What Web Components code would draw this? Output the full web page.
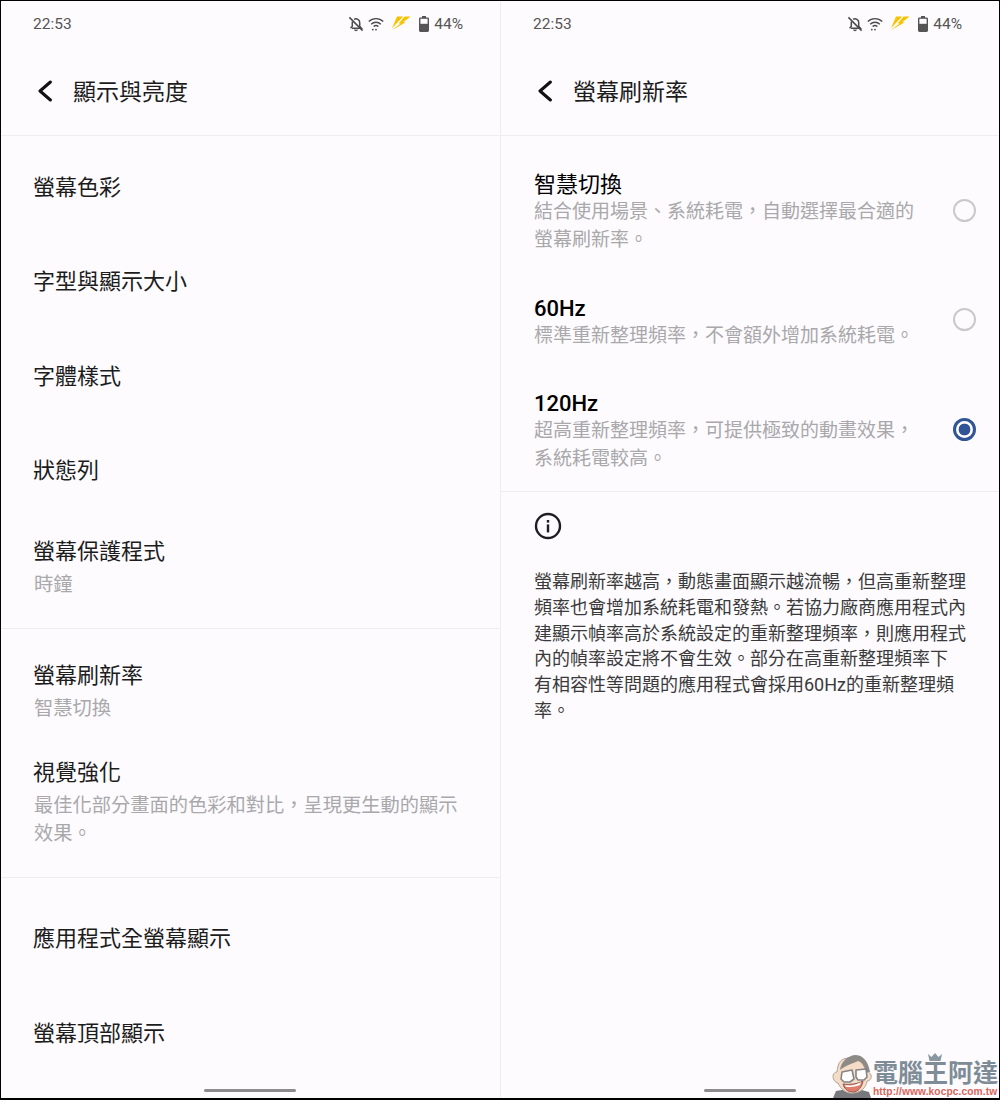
<!DOCTYPE html>
<html lang="zh-Hant">
<head>
<meta charset="utf-8">
<title>螢幕刷新率</title>
<style>
    html, body { margin: 0; padding: 0; background: #fdfbfe; }
    body { font-family: Roboto, "Noto Sans CJK TC", sans-serif; }
</style>
</head>
<body>

<phone-frame>
    <phone-pane>
        <status-bar></status-bar>
        <title-bar>顯示與亮度</title-bar>
        <row-group top="2" bottom="0">
            <plain-row>螢幕色彩</plain-row>
            <plain-row>字型與顯示大小</plain-row>
            <plain-row>字體樣式</plain-row>
            <plain-row>狀態列</plain-row>
        </row-group>
        <row-group top="24" bottom="29" divider>
            <sub-row><span slot="title">螢幕保護程式</span>時鐘</sub-row>
        </row-group>
        <row-group top="34" bottom="29" gap="37" divider>
            <sub-row><span slot="title">螢幕刷新率</span>智慧切換</sub-row>
            <sub-row><span slot="title">視覺強化</span>最佳化部分畫面的色彩和對比，呈現更生動的顯示效果。</sub-row>
        </row-group>
        <row-group top="11" bottom="0">
            <plain-row>應用程式全螢幕顯示</plain-row>
            <plain-row>螢幕頂部顯示</plain-row>
        </row-group>
        <home-bar></home-bar>
    </phone-pane>

    <phone-pane>
        <status-bar></status-bar>
        <title-bar>螢幕刷新率</title-bar>
        <row-group top="36" bottom="18" gap="41.5" divider>
            <radio-row><span slot="title">智慧切換</span>結合使用場景、系統耗電，自動選擇最合適的<br>螢幕刷新率。</radio-row>
            <radio-row><span slot="title" class="latin">60Hz</span>標準重新整理頻率，不會額外增加系統耗電。</radio-row>
            <radio-row checked><span slot="title" class="latin">120Hz</span>超高重新整理頻率，可提供極致的動畫效果，系統耗電較高。</radio-row>
        </row-group>
        <info-note>螢幕刷新率越高，動態畫面顯示越流暢，但高重新整理頻率也會增加系統耗電和發熱。若協力廠商應用程式內建顯示幀率高於系統設定的重新整理頻率，則應用程式內的幀率設定將不會生效。部分在高重新整理頻率下<br>有相容性等問題的應用程式會採用60Hz的重新整理頻率。</info-note>
        <home-bar></home-bar>
    </phone-pane>

    <site-watermark></site-watermark>
</phone-frame>

<script>
const FONT = 'Roboto, "Noto Sans CJK TC", sans-serif'

function shadow(el, html) {
    el.attachShadow({mode: 'open'}).innerHTML = html
}

class PhoneFrame extends HTMLElement {
    constructor() {
        super()
        shadow(this, `
            <style>
                :host {
                    display: flex;
                    position: relative;
                    box-sizing: border-box;
                    width: 1000px;
                    height: 1100px;
                    overflow: hidden;
                    background: #fdfbfe;
                    border: solid #000;
                    border-width: 1px 1px 2px 1px;
                    font-family: ${FONT};
                }
            </style>
            <slot></slot>
        `)
    }
}

class PhonePane extends HTMLElement {
    constructor() {
        super()
        shadow(this, `
            <style>
                :host {
                    display: flex;
                    flex-direction: column;
                    flex: none;
                    position: relative;
                    box-sizing: border-box;
                    width: 498px;
                    height: 100%;
                    --row-pad: 33px;
                }
                :host(:first-child) {
                    width: 500px;
                    border-right: 1px solid #efedf0;
                    --row-pad: 32px;
                }
            </style>
            <slot></slot>
        `)
    }
}

class StatusBar extends HTMLElement {
    constructor() {
        super()
        shadow(this, `
            <style>
                :host {
                    display: flex;
                    align-items: center;
                    height: 45px;
                    padding: 0 37px 0 32px;
                    color: #555;
                    font-size: 15.5px;
                }
                .time { flex: 1; }
                .icons { display: flex; align-items: center; }
                svg { display: block; }
                .pct { margin-left: 5px; }
            </style>
            <span class="time">22:53</span>
            <span class="icons">
                <svg width="16" height="16" viewBox="0 0 16 16" fill="none" stroke="#4a4a4a" stroke-width="1.5">
                    <path d="M4 12.2h9.4l-1.7-2V6.6a3.7 3.7 0 0 0-5.6-3.2"/>
                    <path d="M4.3 5.6v4.6l-1.7 2"/>
                    <path d="M6.6 13.6a1.5 1.5 0 0 0 2.8 0" stroke-width="1.3"/>
                    <path d="M1.4 1.4l13.2 13.2"/>
                </svg>
                <svg style="margin-left:4px" width="16" height="14" viewBox="0 0 16 14" fill="none" stroke="#4a4a4a" stroke-width="1.4">
                    <path d="M.8 4.6a10.2 10.2 0 0 1 14.4 0"/>
                    <path d="M3.2 7.2a6.8 6.8 0 0 1 9.6 0"/>
                    <path d="M5.6 9.6a3.4 3.4 0 0 1 4.8 0"/>
                    <circle cx="4.8" cy="12.6" r=".9" fill="#4a4a4a" stroke="none"/>
                    <circle cx="8" cy="12.6" r=".9" fill="#4a4a4a" stroke="none"/>
                </svg>
                <svg style="margin-left:7px" width="20" height="15" viewBox="0 0 20 15">
                    <path fill="#f7c300" d="M6 .5h6.2L6.4 6.4 1 12.2zM13.6.5H19.6L12.2 6.2h2.6L.4 14.6 9.6 7.4H7.6z"/>
                </svg>
                <svg style="margin-left:8px" width="10" height="16" viewBox="0 0 10 16">
                    <path fill="#555" d="M3 0h4v1.4h1.6A1.4 1.4 0 0 1 10 2.8v11.8A1.4 1.4 0 0 1 8.6 16H1.4A1.4 1.4 0 0 1 0 14.6V2.8A1.4 1.4 0 0 1 1.4 1.4H3z"/>
                    <rect x="1.4" y="2.8" width="7.2" height="5" fill="#fdfbfe"/>
                </svg>
                <span class="pct">44%</span>
            </span>
        `)
    }
}

class TitleBar extends HTMLElement {
    constructor() {
        super()
        shadow(this, `
            <style>
                :host {
                    display: flex;
                    align-items: center;
                    box-sizing: border-box;
                    height: 90px;
                    padding: 0 0 2px 36px;
                    border-bottom: 1px solid #efedf0;
                    color: #1c1c1c;
                    font-size: 23px;
                }
                svg { display: block; margin: 2px 20px 0 0; }
            </style>
            <svg width="16" height="22" viewBox="0 0 16 22" fill="none" stroke="#111" stroke-width="3" stroke-linecap="round" stroke-linejoin="round">
                <path d="M13.4 2 3 11l10.4 9"/>
            </svg>
            <slot></slot>
        `)
    }
}

class RowGroup extends HTMLElement {
    constructor() {
        super()
        shadow(this, `
            <style>
                :host {
                    display: flex;
                    flex-direction: column;
                    flex: none;
                    box-sizing: border-box;
                }
                :host([divider]) { border-bottom: 1px solid #efedf0; }
            </style>
            <slot></slot>
        `)
    }

    connectedCallback() {
        this.style.paddingTop = (this.getAttribute('top') || 0) + 'px'
        this.style.paddingBottom = (this.getAttribute('bottom') || 0) + 'px'
        this.style.gap = (this.getAttribute('gap') || 0) + 'px'
    }
}

class PlainRow extends HTMLElement {
    constructor() {
        super()
        shadow(this, `
            <style>
                :host {
                    display: flex;
                    align-items: center;
                    height: 94.33px;
                    padding-left: var(--row-pad);
                    color: #1c1c1c;
                    font-size: 22px;
                }
            </style>
            <slot></slot>
        `)
    }
}

class SubRow extends HTMLElement {
    constructor() {
        super()
        shadow(this, `
            <style>
                :host {
                    display: block;
                    padding: 0 33px 0 var(--row-pad);
                }
                .title {
                    color: #1c1c1c;
                    font-size: 22px;
                    line-height: 26px;
                    margin-bottom: 6px;
                }
                .sub {
                    margin-left: 1px;
                    color: #a9a8ab;
                    font-size: 19.25px;
                    line-height: 28px;
                }
            </style>
            <div class="title"><slot name="title"></slot></div>
            <div class="sub"><slot></slot></div>
        `)
    }
}

class RadioRow extends HTMLElement {
    constructor() {
        super()
        shadow(this, `
            <style>
                :host {
                    display: flex;
                    align-items: center;
                    padding: 0 23px 0 var(--row-pad);
                }
                .text { flex: 1; min-width: 0; padding-right: 30px; }
                .title {
                    color: #000;
                    font-size: 22px;
                    line-height: 26px;
                }
                ::slotted(.latin) { font-weight: 500; }
                .sub {
                    color: #a9a8ab;
                    font-size: 19px;
                    line-height: 28px;
                }
                .radio {
                    flex: none;
                    box-sizing: border-box;
                    width: 23px;
                    height: 23px;
                    border: 2px solid #c9c8cb;
                    border-radius: 50%;
                    margin-bottom: 6px;
                }
                :host([checked]) .radio {
                    border: 3px solid #2f5597;
                    background: radial-gradient(circle, #2f5597 0 5.6px, transparent 6.2px);
                }
            </style>
            <div class="text">
                <div class="title"><slot name="title"></slot></div>
                <div class="sub"><slot></slot></div>
            </div>
            <div class="radio"></div>
        `)
    }
}

class InfoNote extends HTMLElement {
    constructor() {
        super()
        shadow(this, `
            <style>
                :host {
                    display: block;
                    padding: 20px 32px 0 var(--row-pad);
                    color: #3a3a3a;
                    font-size: 18px;
                    line-height: 25.8px;
                }
                svg { display: block; margin-bottom: 29px; }
            </style>
            <svg width="28" height="28" viewBox="0 0 28 28" fill="none">
                <circle cx="14" cy="14" r="12" stroke="#1d1d22" stroke-width="2.4"/>
                <rect x="12.8" y="12.4" width="2.4" height="8" fill="#1d1d22"/>
                <rect x="12.8" y="8" width="2.4" height="2.6" fill="#1d1d22"/>
            </svg>
            <slot></slot>
        `)
    }
}

class HomeBar extends HTMLElement {
    constructor() {
        super()
        shadow(this, `
            <style>
                :host {
                    position: absolute;
                    left: 203px;
                    bottom: 6px;
                    width: 92px;
                    height: 3px;
                    border-radius: 2px;
                    background: #8c8c8c;
                }
            </style>
        `)
    }
}

class SiteWatermark extends HTMLElement {
    constructor() {
        super()
        shadow(this, `
            <style>
                :host {
                    position: absolute;
                    right: 0;
                    bottom: 0;
                    width: 171px;
                    height: 48px;
                    display: flex;
                    font-family: "Liberation Sans", "Noto Sans CJK TC", sans-serif;
                }
                svg { display: block; flex: none; }
                .brand { position: relative; flex: 1; white-space: nowrap; }
                .name {
                    position: absolute;
                    left: 0;
                    top: 11px;
                    color: #7e8c97;
                    font-size: 25px;
                    line-height: 24px;
                    font-weight: 700;
                }
                .url {
                    position: absolute;
                    left: 0;
                    bottom: 0;
                    color: #d8675c;
                    font-size: 10.2px;
                    line-height: 12px;
                    font-weight: 700;
                    letter-spacing: .1px;
                }
                .crown { position: absolute; left: 54px; top: 3px; }
            </style>
            <svg width="45" height="48" viewBox="0 0 45 48">
                <path d="M5 48l3-7 12-2 10 0 11 3 2 6z" fill="#77797c"/>
                <path d="M9 22c-4 0-5 5-3 8 1 2 3 3 4 3 3 7 9 11 16 10 7-1 12-5 13-12 3 0 5-3 4-6s-4-3-5-2c-1-8-6-15-16-15S10 13 9 22z" fill="#f4dcc7" stroke="#b3a497"/>
                <path d="M12 20c1-8 7-14 15-15 8 0 13 6 15 17l-4 0c-1-6-4-10-8-11-6 3-12 4-18 9z" fill="#8e8a86"/>
                <path d="M14 22l10-2 2 9-4 3-6 0-3-3z" fill="#fff" stroke="#858585" stroke-width="1.6" stroke-linejoin="round"/>
                <path d="M28 20l10-1 1 8-3 3-6 0-2-3z" fill="#fff" stroke="#858585" stroke-width="1.6" stroke-linejoin="round"/>
                <path d="M15 34c7 1 14 0 20-3-1 6-5 11-10 11-6 0-9-4-10-8z" fill="#e17b6c" stroke="#8f5b50"/>
                <path d="M17 35c6 1 11 0 16-3l-1 3c-5 2-10 2-14 2z" fill="#fff"/>
            </svg>
            <div class="brand">
                <svg class="crown" width="16" height="8" viewBox="0 0 16 8"><path fill="#8a96a0" d="M1 1l3.5 3L8 0l3.5 4L15 1l-1.5 7h-11z"/></svg>
                <span class="name">電腦王阿達</span>
                <span class="url">http://www.kocpc.com.tw</span>
            </div>
        `)
    }
}

window.customElements.define('phone-frame', PhoneFrame)
window.customElements.define('phone-pane', PhonePane)
window.customElements.define('status-bar', StatusBar)
window.customElements.define('title-bar', TitleBar)
window.customElements.define('row-group', RowGroup)
window.customElements.define('plain-row', PlainRow)
window.customElements.define('sub-row', SubRow)
window.customElements.define('radio-row', RadioRow)
window.customElements.define('info-note', InfoNote)
window.customElements.define('home-bar', HomeBar)
window.customElements.define('site-watermark', SiteWatermark)
</script>
</body>
</html>
